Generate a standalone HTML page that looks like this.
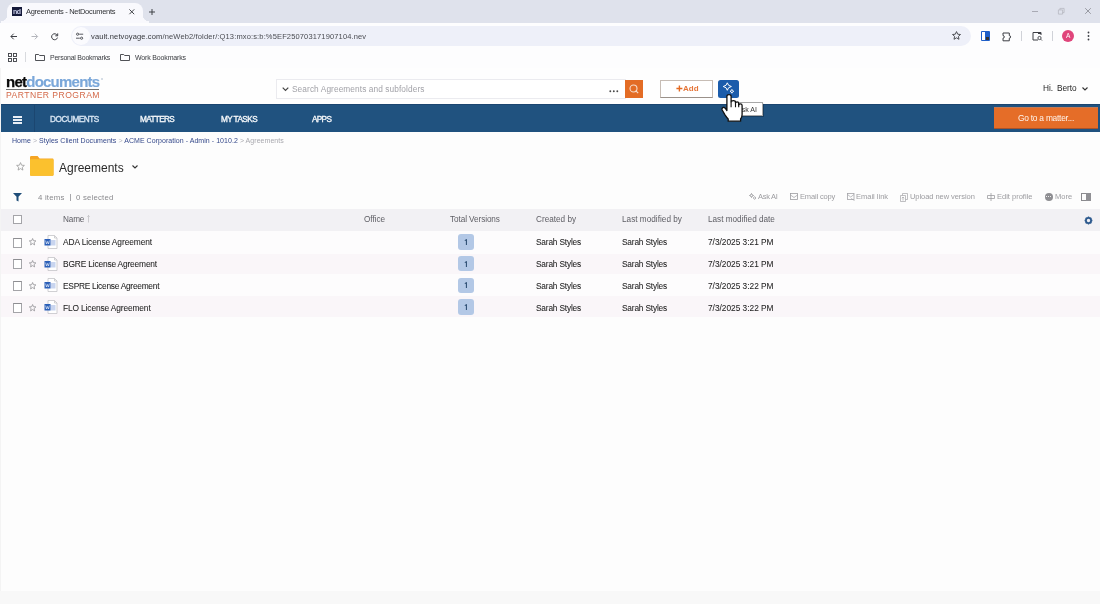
<!DOCTYPE html>
<html><head><meta charset="utf-8">
<style>
*{box-sizing:border-box;margin:0;padding:0}
html,body{width:1100px;height:604px;overflow:hidden;background:#fdfdfd;font-family:"Liberation Sans",sans-serif;-webkit-font-smoothing:antialiased;}
.a{position:absolute}
.t{position:absolute;white-space:nowrap;line-height:1;will-change:transform}
svg{position:absolute;overflow:visible}
</style></head><body>
<!-- TAB STRIP -->
<div class="a" style="left:0;top:0;width:1100px;height:23px;background:#dfe2ec"></div>
<div class="a" style="left:7px;top:3px;width:136px;height:20px;background:#f9f9fd;border-radius:8px 8px 0 0"></div>
<div class="a" style="left:1px;top:15px;width:6px;height:8px;background:radial-gradient(circle at 0 0,#dfe2ec 6px,#f9f9fd 6.5px)"></div>
<div class="a" style="left:143px;top:15px;width:6px;height:8px;background:radial-gradient(circle at 100% 0,#dfe2ec 6px,#f9f9fd 6.5px)"></div>
<div class="a" style="left:12px;top:7px;width:10px;height:9px;background:#151a3a"></div>
<div class="t" style="left:13px;top:8px;font-size:7px;color:#c8cce8;font-weight:bold;letter-spacing:-0.5px">nd</div>
<div class="t" style="left:26px;top:8px;font-size:7.5px;letter-spacing:-0.3px;color:#303236">Agreements - NetDocuments</div>
<svg style="left:129px;top:9.2px" width="6" height="6"><path d="M0.4 0.4L5.2 5.2M5.2 0.4L0.4 5.2" stroke="#3a3c40" stroke-width="0.95"/></svg>
<svg style="left:149.3px;top:8.5px" width="6" height="6"><path d="M3 0V6M0 3H6" stroke="#3a3c40" stroke-width="0.95"/></svg>
<svg style="left:1032px;top:10.7px" width="6" height="2"><path d="M0 0.5H6" stroke="#9a9ca6" stroke-width="0.8"/></svg>
<svg style="left:1057.8px;top:8px" width="7" height="7"><path d="M0.4 1.9H4.6V6.1H0.4Z M1.9 1.9V0.4H6.1V4.6H4.6" stroke="#b4b6be" stroke-width="0.75" fill="none"/></svg>
<svg style="left:1084.6px;top:8.3px" width="6" height="6"><path d="M0.2 0.2L5.8 5.8M5.8 0.2L0.2 5.8" stroke="#80828a" stroke-width="0.75"/></svg>

<!-- TOOLBAR -->
<div class="a" style="left:0;top:23px;width:1100px;height:45px;background:#fdfdfe"></div>
<svg style="left:10px;top:32.6px" width="8" height="8"><path d="M7 3.5H1M3.7 0.7L0.9 3.5L3.7 6.3" stroke="#3c3e44" stroke-width="1" fill="none"/></svg>
<svg style="left:30.8px;top:32.6px" width="8" height="8"><path d="M0.5 3.5H6.5M3.8 0.7L6.6 3.5L3.8 6.3" stroke="#b4b6bc" stroke-width="1" fill="none"/></svg>
<svg style="left:51px;top:32.6px" width="8" height="8"><path d="M6.3 2.4A3 3 0 1 0 6.5 4.6" stroke="#3c3e44" stroke-width="1" fill="none"/><path d="M6.7 0.4V2.8H4.3" stroke="#3c3e44" stroke-width="1" fill="none"/></svg>
<div class="a" style="left:71px;top:26px;width:900px;height:20px;background:#eef0f9;border-radius:10px"></div>
<div class="a" style="left:72px;top:27px;width:18px;height:18px;background:#fbfbfe;border-radius:9px"></div>
<svg style="left:76.3px;top:33px" width="8" height="7"><path d="M3.2 1.2H7.2M0 5.2H3.8" stroke="#3c3e44" stroke-width="0.85"/><circle cx="1.6" cy="1.2" r="1.1" stroke="#3c3e44" stroke-width="0.85" fill="none"/><circle cx="5.6" cy="5.2" r="1.1" stroke="#3c3e44" stroke-width="0.85" fill="none"/></svg>
<div class="t" style="left:91px;top:32.5px;font-size:7.5px;letter-spacing:0.14px;color:#35373c">vault.netvoyage.com<span style="color:#4a4c52">/neWeb2/folder/:Q13:mxo:s:b:%5EF250703171907104.nev</span></div>
<svg style="left:952px;top:31px" width="9" height="9"><path d="M4.5 0.6L5.7 3.2L8.5 3.5L6.4 5.4L7 8.3L4.5 6.8L2 8.3L2.6 5.4L0.5 3.5L3.3 3.2Z" stroke="#3c3e44" stroke-width="0.9" fill="none"/></svg>
<!-- ext icons -->
<div class="a" style="left:981px;top:31px;width:9px;height:10px;background:#1f5fc8;border-radius:1px"></div>
<div class="a" style="left:982px;top:32px;width:3px;height:8px;background:#fff"></div>
<div class="a" style="left:986px;top:37px;width:3px;height:3px;background:#333"></div>
<svg style="left:1001.5px;top:31.5px" width="11" height="10"><path d="M1 1H7.3V3.6A1.3 1.3 0 0 1 7.3 6.2V8.8H1V6.2A1.3 1.3 0 0 0 1 3.6Z" stroke="#3c3e44" stroke-width="1" fill="none" stroke-linejoin="round"/></svg>
<div class="a" style="left:1021px;top:31px;width:1px;height:10px;background:#d0d2d8"></div>
<svg style="left:1032px;top:31px" width="11" height="10"><path d="M6 9H1V1.5H9V4" stroke="#3c3e44" stroke-width="1" fill="none"/><circle cx="7.5" cy="7" r="1.6" stroke="#3c3e44" stroke-width="0.9" fill="none"/><path d="M8.7 8.2L10 9.5" stroke="#3c3e44" stroke-width="0.9"/><rect x="6" y="1" width="3" height="2" fill="#3c3e44"/></svg>
<div class="a" style="left:1052px;top:31px;width:1px;height:10px;background:#d0d2d8"></div>
<div class="a" style="left:1062px;top:30px;width:12px;height:12px;background:#e0457b;border-radius:6px"></div>
<div class="t" style="left:1065.5px;top:33px;font-size:6.5px;color:#fff">A</div>
<svg style="left:1087px;top:31px" width="3" height="10"><circle cx="1.5" cy="1.5" r="0.9" fill="#3c3e44"/><circle cx="1.5" cy="5" r="0.9" fill="#3c3e44"/><circle cx="1.5" cy="8.5" r="0.9" fill="#3c3e44"/></svg>

<!-- BOOKMARKS -->
<svg style="left:8px;top:53px" width="9" height="9"><rect x="0.5" y="0.5" width="3" height="3" stroke="#3c3e44" stroke-width="0.9" fill="none"/><rect x="5.5" y="0.5" width="3" height="3" stroke="#3c3e44" stroke-width="0.9" fill="none"/><rect x="0.5" y="5.5" width="3" height="3" stroke="#3c3e44" stroke-width="0.9" fill="none"/><rect x="5.5" y="5.5" width="3" height="3" stroke="#3c3e44" stroke-width="0.9" fill="none"/></svg>
<div class="a" style="left:25px;top:52px;width:1px;height:10px;background:#d8dade"></div>
<svg style="left:34.8px;top:54.2px" width="10" height="7"><path d="M0.5 0.5H3.7L4.6 1.5H9.5V6.5H0.5Z" stroke="#3c3e44" stroke-width="0.9" fill="none"/></svg>
<div class="t" style="left:49.5px;top:54px;font-size:7px;letter-spacing:-0.25px;color:#3a3c40">Personal Bookmarks</div>
<svg style="left:120.3px;top:54.2px" width="10" height="7"><path d="M0.5 0.5H3.7L4.6 1.5H9.5V6.5H0.5Z" stroke="#3c3e44" stroke-width="0.9" fill="none"/></svg>
<div class="t" style="left:135px;top:54px;font-size:7px;letter-spacing:-0.16px;color:#3a3c40">Work Bookmarks</div>


<!-- APP HEADER -->
<div class="a" style="left:0;top:68px;width:1100px;height:36px;background:#fefefe"></div>
<div class="t" style="left:5.8px;top:73.9px;font-size:15px;font-weight:bold;letter-spacing:-0.76px;color:#0a0a0a;-webkit-text-stroke:0.25px #0a0a0a">net<span style="color:#7aa7d9;-webkit-text-stroke:0.15px #7aa7d9">documents</span></div>
<div class="a" style="left:100.5px;top:77.5px;width:2.5px;height:2.5px;border-radius:50%;border:0.5px solid #b8c4d4"></div>
<div class="a" style="left:6px;top:89px;width:93px;height:1px;background:#707070"></div>
<div class="t" style="left:6px;top:90.9px;font-size:8.6px;color:#d46a4a;letter-spacing:0.46px">PARTNER PROGRAM</div>

<!-- search -->
<div class="a" style="left:276px;top:79px;width:350px;height:19.5px;border:1px solid #ebebef;background:#fff"></div>
<svg style="left:281.5px;top:86.8px" width="7" height="5"><path d="M0.7 0.7L3.5 3.5L6.3 0.7" stroke="#444" stroke-width="1.2" fill="none"/></svg>
<div class="t" style="left:291.8px;top:85px;font-size:8.3px;letter-spacing:0.09px;color:#a2a2a8">Search Agreements and subfolders</div>
<svg style="left:608.5px;top:90px" width="11" height="3"><circle cx="1.3" cy="1.3" r="0.95" fill="#4a4a4a"/><circle cx="4.8" cy="1.3" r="0.95" fill="#4a4a4a"/><circle cx="8.3" cy="1.3" r="0.95" fill="#4a4a4a"/></svg>
<div class="a" style="left:625px;top:79.5px;width:18px;height:18.5px;background:#e36c25"></div>
<svg style="left:629px;top:83.5px" width="10" height="10"><circle cx="4.5" cy="4.5" r="3.5" stroke="#f6dccb" stroke-width="1.1" fill="none"/><path d="M6.7 6.7L9.2 9.2" stroke="#f6dccb" stroke-width="1.2"/></svg>
<!-- add -->
<div class="a" style="left:660px;top:79.5px;width:53px;height:18.5px;border:1px solid #c7bdb5;border-bottom-color:#9a918a;background:#fff"></div>
<svg style="left:675.5px;top:85.3px" width="8" height="8"><path d="M3.4 0.4V6.6M0.4 3.5H6.4" stroke="#e46a22" stroke-width="1.4"/></svg>
<div class="t" style="left:683px;top:85px;font-size:8px;font-weight:bold;color:#e5763a">Add</div>
<!-- ai btn -->
<div class="a" style="left:718px;top:80px;width:21px;height:18px;background:#1b5cab;border-radius:2.5px"></div>
<svg style="left:722px;top:82px" width="14" height="14"><path d="M5.3 0.8Q5.9 4 9.4 4.5Q5.9 5 5.3 8.3Q4.7 5 1.2 4.5Q4.7 4 5.3 0.8Z" stroke="#fff" stroke-width="1" fill="none" stroke-linejoin="round"/><path d="M9.9 7.4Q10.2 9 11.8 9.3Q10.2 9.6 9.9 11.2Q9.6 9.6 8 9.3Q9.6 9 9.9 7.4Z" stroke="#fff" stroke-width="0.9" fill="none"/></svg>
<div class="t" style="left:1042.5px;top:84px;font-size:8.3px;color:#262626">Hi.</div><div class="t" style="left:1056.6px;top:84px;font-size:8.3px;letter-spacing:-0.05px;color:#262626">Berto</div>
<svg style="left:1082px;top:86.8px" width="6" height="4"><path d="M0.5 0.5L3 3L5.5 0.5" stroke="#333" stroke-width="1.1" fill="none"/></svg>

<!-- NAV -->
<div class="a" style="left:1px;top:104px;width:1099px;height:27.5px;background:#20527f"></div>
<div class="a" style="left:1px;top:103.6px;width:1099px;height:1px;background:#1b4570"></div>
<div class="a" style="left:33.5px;top:104px;width:1px;height:27.5px;background:#1b4670"></div>
<div class="a" style="left:13px;top:116px;width:9px;height:1.6px;background:#e8eef5"></div>
<div class="a" style="left:13px;top:119px;width:9px;height:1.6px;background:#e8eef5"></div>
<div class="a" style="left:13px;top:122px;width:9px;height:1.6px;background:#e8eef5"></div>
<div class="t" style="left:50px;top:115.6px;font-size:8.2px;letter-spacing:-0.43px;color:#d6e4f2;-webkit-text-stroke:0.35px #d6e4f2">DOCUMENTS</div>
<div class="t" style="left:139.5px;top:115.6px;font-size:8.2px;letter-spacing:-0.62px;color:#f4f7fa;-webkit-text-stroke:0.35px #f4f7fa">MATTERS</div>
<div class="t" style="left:220.5px;top:115.6px;font-size:8.2px;letter-spacing:-0.55px;color:#f4f7fa;-webkit-text-stroke:0.35px #f4f7fa">MY TASKS</div>
<div class="t" style="left:311.5px;top:115.6px;font-size:8.2px;letter-spacing:-0.65px;color:#f4f7fa;-webkit-text-stroke:0.35px #f4f7fa">APPS</div>
<div class="a" style="left:994px;top:107px;width:104px;height:22.2px;background:#e56d28;border-top:1px solid #c47a55;border-bottom:1px solid #a9532a"></div>
<div class="t" style="left:1018px;top:114px;font-size:8.4px;letter-spacing:-0.24px;color:#fff4ec">Go to a matter...</div>

<!-- tooltip -->
<div class="a" style="left:733px;top:102px;width:30px;height:14px;background:#fff;border:1px solid #a8a8a8;box-shadow:0.5px 0.5px 1px rgba(0,0,0,.25)"></div>
<div class="t" style="left:737.3px;top:105.5px;font-size:7px;color:#333">Ask AI</div>
<!-- cursor -->
<svg style="left:720.5px;top:94px" width="23" height="28" viewBox="0 0 23 28"><path d="M5.9 2.2Q5.9 0.6 8 0.6Q10.1 0.6 10.1 2.2V7.8Q10.1 6.7 12.3 6.7Q14.5 6.7 14.5 8.2V9Q14.5 7.9 16.1 7.9Q17.7 7.9 17.7 9.4V11Q17.7 9.9 19.4 9.9Q21.1 9.9 21.1 11.5V20.5Q21.1 23 19.6 25V27.2H7.2V25Q6 23.8 4 20.8L1.2 16Q0.5 14.5 1.8 13.6Q3 13 4.2 14.2L5.9 16.5Z" fill="#fff" stroke="#111" stroke-width="1.3" stroke-linejoin="round"/><path d="M10.1 7.8V13.2M14.5 8.5V13.2M17.7 9.5V13.2" stroke="#111" stroke-width="1.1"/></svg>

<!-- BREADCRUMB -->
<div class="t" style="left:11.6px;top:137px;font-size:7px;letter-spacing:0.05px;color:#34488a">Home <span style="color:#b4b4bc">&gt;</span> Styles Client Documents <span style="color:#b4b4bc">&gt;</span> ACME Corporation - Admin - 1010.2 <span style="color:#a8a8ae">&gt; Agreements</span></div>

<!-- folder title -->
<svg style="left:16px;top:162px" width="9" height="9"><path d="M4.5 0.6L5.6 3.2L8.4 3.4L6.3 5.3L6.9 8.1L4.5 6.6L2.1 8.1L2.7 5.3L0.6 3.4L3.4 3.2Z" stroke="#999" stroke-width="0.8" fill="none"/></svg>
<svg style="left:30px;top:156px" width="24" height="20"><path d="M0 1.2Q0 0 1.2 0H7.6L9.6 2.5H22.6Q23.5 2.5 23.5 3.5V18.8Q23.5 19.8 22.5 19.8H1.1Q0 19.8 0 18.8Z" fill="#f5a524"/><path d="M0 4Q0 3.3 0.8 3.3H22.6Q23.5 3.3 23.5 4.3V18.8Q23.5 19.8 22.5 19.8H1.1Q0 19.8 0 18.8Z" fill="#fbc12e"/></svg>
<div class="t" style="left:59px;top:161.5px;font-size:12px;color:#2a2a2a">Agreements</div>
<svg style="left:131.5px;top:165px" width="6" height="4"><path d="M0.5 0.5L3 3L5.5 0.5" stroke="#333" stroke-width="1.1" fill="none"/></svg>

<!-- filter bar -->
<svg style="left:13px;top:193px" width="9" height="9"><path d="M0 0H9L5.5 3.8V8.6L3.5 7.4V3.8Z" fill="#1f4e79"/></svg>
<div class="t" style="left:38px;top:193.7px;font-size:7.8px;letter-spacing:0.2px;color:#8a8a8e">4 items</div><div class="a" style="left:70px;top:194.3px;width:0.8px;height:7px;background:#a8a8ac"></div><div class="t" style="left:75.6px;top:193.7px;font-size:7.8px;letter-spacing:0.2px;color:#8a8a8e">0 selected</div>


<!-- actions -->
<svg style="left:749px;top:193px" width="8" height="7"><path d="M2.5 0.5Q2.8 2.2 4.5 2.5Q2.8 2.8 2.5 4.5Q2.2 2.8 0.5 2.5Q2.2 2.2 2.5 0.5Z" stroke="#8a8a8e" stroke-width="0.8" fill="none"/><path d="M5.6 3.6L6.9 5L5.6 6.4L4.3 5Z" stroke="#8a8a8e" stroke-width="0.7" fill="none"/></svg>
<div class="t" style="left:758px;top:193px;font-size:7.5px;letter-spacing:-0.3px;color:#9c9ca0">Ask AI</div>
<svg style="left:790px;top:193px" width="8" height="7"><rect x="0.5" y="0.5" width="7" height="6" stroke="#9c9ca0" stroke-width="0.8" fill="none"/><path d="M0.5 2L4 4.5L7.5 2" stroke="#9c9ca0" stroke-width="0.7" fill="none"/></svg>
<div class="t" style="left:799.5px;top:193px;font-size:7.5px;letter-spacing:-0.15px;color:#9c9ca0">Email copy</div>
<svg style="left:847px;top:192.5px" width="8" height="8"><rect x="0.5" y="0.5" width="6.5" height="6" stroke="#a4a4a8" stroke-width="0.8" fill="none"/><path d="M0.5 1.5L3.7 4L7 1.5M4 5.5L7.5 7.5" stroke="#a4a4a8" stroke-width="0.7" fill="none"/></svg>
<div class="t" style="left:856px;top:193px;font-size:7.5px;color:#9c9ca0">Email link</div>
<svg style="left:900px;top:192.5px" width="9" height="9"><path d="M2.5 2.5V0.5H7.5V6.5H5.5M0.5 2.5H5.5V8.5H0.5Z M3 7.5V4M1.8 5.2L3 4L4.2 5.2" stroke="#a4a4a8" stroke-width="0.7" fill="none"/></svg>
<div class="t" style="left:910px;top:193px;font-size:7.5px;letter-spacing:-0.06px;color:#9c9ca0">Upload new version</div>
<svg style="left:987px;top:192.5px" width="8" height="8"><path d="M4 0V8M0.5 2.5H7.5V5.5H0.5Z" stroke="#9c9ca0" stroke-width="0.8" fill="none"/></svg>
<div class="t" style="left:996.5px;top:193px;font-size:7.5px;color:#9c9ca0">Edit profile</div>
<div class="a" style="left:1044.5px;top:192.5px;width:8px;height:8px;border-radius:4px;background:#8e8e92"></div>
<div class="a" style="left:1046px;top:196px;width:1px;height:1px;background:#eee"></div><div class="a" style="left:1048px;top:196px;width:1px;height:1px;background:#eee"></div><div class="a" style="left:1050px;top:196px;width:1px;height:1px;background:#eee"></div>
<div class="t" style="left:1055px;top:193px;font-size:7.5px;color:#9c9ca0">More</div>
<div class="a" style="left:1081px;top:193px;width:10px;height:8px;border:1.2px solid #8a8a8e"></div>
<div class="a" style="left:1086px;top:193px;width:5px;height:8px;background:#909094"></div>

<!-- table header -->
<div class="a" style="left:1px;top:209px;width:1099px;height:21.8px;background:#f2f1f4"></div>
<div class="a" style="left:13px;top:215px;width:9px;height:9px;border:1px solid #a4a4a8;background:#fff"></div>
<div class="t" style="left:63px;top:215.8px;font-size:8.2px;letter-spacing:-0.14px;color:#5e5e64">Name</div>
<svg style="left:87.3px;top:214.5px" width="3" height="8"><path d="M1.5 0.5V7.5M0.3 1.7L1.5 0.5L2.7 1.7" stroke="#b0b0b4" stroke-width="0.6" fill="none"/></svg>
<div class="t" style="left:364px;top:215.8px;font-size:8.2px;letter-spacing:-0.05px;color:#5e5e64">Office</div>
<div class="t" style="left:450px;top:215.8px;font-size:8.2px;letter-spacing:-0.08px;color:#5e5e64">Total Versions</div>
<div class="t" style="left:535.5px;top:215.8px;font-size:8.2px;letter-spacing:0px;color:#5e5e64">Created by</div>
<div class="t" style="left:621.5px;top:215.8px;font-size:8.2px;letter-spacing:0.02px;color:#5e5e64">Last modified by</div>
<div class="t" style="left:707.5px;top:215.8px;font-size:8.2px;letter-spacing:0px;color:#5e5e64">Last modified date</div>
<svg style="left:1084px;top:216px" width="9" height="9" viewBox="0 0 9 9"><circle cx="4.5" cy="4.5" r="2.6" stroke="#2d5a8e" stroke-width="1.8" fill="none"/><path d="M4.5 0.6V2M4.5 7V8.4M0.6 4.5H2M7 4.5H8.4M1.7 1.7L2.7 2.7M6.3 6.3L7.3 7.3M1.7 7.3L2.7 6.3M6.3 2.7L7.3 1.7" stroke="#2d5a8e" stroke-width="1.3"/></svg>

<div class="a" style="left:1px;top:230.8px;width:1099px;height:22.8px;background:#fdfcfd"></div>
<div class="a" style="left:13px;top:237.60px;width:9px;height:10px;border:1px solid #a4a4a8;border-top-color:#8e8e92;background:#fff"></div>
<svg style="left:28.5px;top:238.20px" width="8" height="8"><path d="M3.6 0.5L4.5 2.7L6.9 2.9L5.1 4.5L5.6 6.9L3.6 5.6L1.6 6.9L2.1 4.5L0.3 2.9L2.7 2.7Z" stroke="#8e8e92" stroke-width="0.75" fill="none" stroke-linejoin="round"/></svg>
<svg style="left:43.5px;top:234.70000000000002px" width="14" height="14"><path d="M4 0.5H10.5L13 3V13.5H4Z" fill="#fff" stroke="#c4c4c8" stroke-width="0.8"/><path d="M10.5 0.5V3H13" fill="none" stroke="#c4c4c8" stroke-width="0.8"/><rect x="6.5" y="5" width="5" height="5.5" fill="#c9d5ef"/><rect x="0.5" y="4" width="6" height="6.5" fill="#2b5fb8"/><path d="M1.6 5.6L2.5 9L3.5 6.5L4.5 9L5.4 5.6" stroke="#fff" stroke-width="0.6" fill="none"/></svg>
<div class="t" style="left:63px;top:238.40px;font-size:8.4px;letter-spacing:-0.08px;color:#1c1c1c;-webkit-text-stroke:0.05px #1c1c1c">ADA License Agreement</div>
<div class="a" style="left:458px;top:233.9px;width:15.7px;height:15.7px;background:#b3c8e6;border-radius:3px"></div>
<svg style="left:464px;top:238.70px" width="4" height="7"><path d="M0.8 1.6L2.4 0.6V6" stroke="#2a4a70" stroke-width="1.05" fill="none" stroke-linejoin="round"/></svg>
<div class="t" style="left:535.5px;top:238.40px;font-size:8.3px;letter-spacing:-0.17px;color:#1c1c1c;-webkit-text-stroke:0.05px #1c1c1c">Sarah Styles</div>
<div class="t" style="left:621.5px;top:238.40px;font-size:8.3px;letter-spacing:-0.17px;color:#1c1c1c;-webkit-text-stroke:0.05px #1c1c1c">Sarah Styles</div>
<div class="t" style="left:707.5px;top:238.40px;font-size:8.3px;letter-spacing:0px;color:#1c1c1c;-webkit-text-stroke:0.05px #1c1c1c">7/3/2025 3:21 PM</div>

<div class="a" style="left:1px;top:253.6px;width:1099px;height:20.4px;background:#faf6f9"></div>
<div class="a" style="left:13px;top:259.45px;width:9px;height:10px;border:1px solid #a4a4a8;border-top-color:#8e8e92;background:#fff"></div>
<svg style="left:28.5px;top:260.05px" width="8" height="8"><path d="M3.6 0.5L4.5 2.7L6.9 2.9L5.1 4.5L5.6 6.9L3.6 5.6L1.6 6.9L2.1 4.5L0.3 2.9L2.7 2.7Z" stroke="#8e8e92" stroke-width="0.75" fill="none" stroke-linejoin="round"/></svg>
<svg style="left:43.5px;top:256.55px" width="14" height="14"><path d="M4 0.5H10.5L13 3V13.5H4Z" fill="#fff" stroke="#c4c4c8" stroke-width="0.8"/><path d="M10.5 0.5V3H13" fill="none" stroke="#c4c4c8" stroke-width="0.8"/><rect x="6.5" y="5" width="5" height="5.5" fill="#c9d5ef"/><rect x="0.5" y="4" width="6" height="6.5" fill="#2b5fb8"/><path d="M1.6 5.6L2.5 9L3.5 6.5L4.5 9L5.4 5.6" stroke="#fff" stroke-width="0.6" fill="none"/></svg>
<div class="t" style="left:63px;top:260.25px;font-size:8.4px;letter-spacing:-0.17px;color:#1c1c1c;-webkit-text-stroke:0.05px #1c1c1c">BGRE License Agreement</div>
<div class="a" style="left:458px;top:255.75px;width:15.7px;height:15.7px;background:#b3c8e6;border-radius:3px"></div>
<svg style="left:464px;top:260.55px" width="4" height="7"><path d="M0.8 1.6L2.4 0.6V6" stroke="#2a4a70" stroke-width="1.05" fill="none" stroke-linejoin="round"/></svg>
<div class="t" style="left:535.5px;top:260.25px;font-size:8.3px;letter-spacing:-0.17px;color:#1c1c1c;-webkit-text-stroke:0.05px #1c1c1c">Sarah Styles</div>
<div class="t" style="left:621.5px;top:260.25px;font-size:8.3px;letter-spacing:-0.17px;color:#1c1c1c;-webkit-text-stroke:0.05px #1c1c1c">Sarah Styles</div>
<div class="t" style="left:707.5px;top:260.25px;font-size:8.3px;letter-spacing:0px;color:#1c1c1c;-webkit-text-stroke:0.05px #1c1c1c">7/3/2025 3:21 PM</div>

<div class="a" style="left:1px;top:274px;width:1099px;height:22.4px;background:#fdfcfd"></div>
<div class="a" style="left:13px;top:281.30px;width:9px;height:10px;border:1px solid #a4a4a8;border-top-color:#8e8e92;background:#fff"></div>
<svg style="left:28.5px;top:281.90px" width="8" height="8"><path d="M3.6 0.5L4.5 2.7L6.9 2.9L5.1 4.5L5.6 6.9L3.6 5.6L1.6 6.9L2.1 4.5L0.3 2.9L2.7 2.7Z" stroke="#8e8e92" stroke-width="0.75" fill="none" stroke-linejoin="round"/></svg>
<svg style="left:43.5px;top:278.4px" width="14" height="14"><path d="M4 0.5H10.5L13 3V13.5H4Z" fill="#fff" stroke="#c4c4c8" stroke-width="0.8"/><path d="M10.5 0.5V3H13" fill="none" stroke="#c4c4c8" stroke-width="0.8"/><rect x="6.5" y="5" width="5" height="5.5" fill="#c9d5ef"/><rect x="0.5" y="4" width="6" height="6.5" fill="#2b5fb8"/><path d="M1.6 5.6L2.5 9L3.5 6.5L4.5 9L5.4 5.6" stroke="#fff" stroke-width="0.6" fill="none"/></svg>
<div class="t" style="left:63px;top:282.10px;font-size:8.4px;letter-spacing:-0.27px;color:#1c1c1c;-webkit-text-stroke:0.05px #1c1c1c">ESPRE License Agreement</div>
<div class="a" style="left:458px;top:277.59999999999997px;width:15.7px;height:15.7px;background:#b3c8e6;border-radius:3px"></div>
<svg style="left:464px;top:282.40px" width="4" height="7"><path d="M0.8 1.6L2.4 0.6V6" stroke="#2a4a70" stroke-width="1.05" fill="none" stroke-linejoin="round"/></svg>
<div class="t" style="left:535.5px;top:282.10px;font-size:8.3px;letter-spacing:-0.17px;color:#1c1c1c;-webkit-text-stroke:0.05px #1c1c1c">Sarah Styles</div>
<div class="t" style="left:621.5px;top:282.10px;font-size:8.3px;letter-spacing:-0.17px;color:#1c1c1c;-webkit-text-stroke:0.05px #1c1c1c">Sarah Styles</div>
<div class="t" style="left:707.5px;top:282.10px;font-size:8.3px;letter-spacing:0px;color:#1c1c1c;-webkit-text-stroke:0.05px #1c1c1c">7/3/2025 3:22 PM</div>

<div class="a" style="left:1px;top:296.4px;width:1099px;height:20.3px;background:#faf6f9"></div>
<div class="a" style="left:13px;top:303.15px;width:9px;height:10px;border:1px solid #a4a4a8;border-top-color:#8e8e92;background:#fff"></div>
<svg style="left:28.5px;top:303.75px" width="8" height="8"><path d="M3.6 0.5L4.5 2.7L6.9 2.9L5.1 4.5L5.6 6.9L3.6 5.6L1.6 6.9L2.1 4.5L0.3 2.9L2.7 2.7Z" stroke="#8e8e92" stroke-width="0.75" fill="none" stroke-linejoin="round"/></svg>
<svg style="left:43.5px;top:300.25px" width="14" height="14"><path d="M4 0.5H10.5L13 3V13.5H4Z" fill="#fff" stroke="#c4c4c8" stroke-width="0.8"/><path d="M10.5 0.5V3H13" fill="none" stroke="#c4c4c8" stroke-width="0.8"/><rect x="6.5" y="5" width="5" height="5.5" fill="#c9d5ef"/><rect x="0.5" y="4" width="6" height="6.5" fill="#2b5fb8"/><path d="M1.6 5.6L2.5 9L3.5 6.5L4.5 9L5.4 5.6" stroke="#fff" stroke-width="0.6" fill="none"/></svg>
<div class="t" style="left:63px;top:303.95px;font-size:8.4px;letter-spacing:-0.13px;color:#1c1c1c;-webkit-text-stroke:0.05px #1c1c1c">FLO License Agreement</div>
<div class="a" style="left:458px;top:299.45px;width:15.7px;height:15.7px;background:#b3c8e6;border-radius:3px"></div>
<svg style="left:464px;top:304.25px" width="4" height="7"><path d="M0.8 1.6L2.4 0.6V6" stroke="#2a4a70" stroke-width="1.05" fill="none" stroke-linejoin="round"/></svg>
<div class="t" style="left:535.5px;top:303.95px;font-size:8.3px;letter-spacing:-0.17px;color:#1c1c1c;-webkit-text-stroke:0.05px #1c1c1c">Sarah Styles</div>
<div class="t" style="left:621.5px;top:303.95px;font-size:8.3px;letter-spacing:-0.17px;color:#1c1c1c;-webkit-text-stroke:0.05px #1c1c1c">Sarah Styles</div>
<div class="t" style="left:707.5px;top:303.95px;font-size:8.3px;letter-spacing:0px;color:#1c1c1c;-webkit-text-stroke:0.05px #1c1c1c">7/3/2025 3:22 PM</div>

<!-- bottom -->
<div class="a" style="left:0;top:590.8px;width:1100px;height:14px;background:#f8f8f8"></div>
<div class="a" style="left:0;top:68px;width:1px;height:523px;background:#f4f4f4"></div>
</body></html>
